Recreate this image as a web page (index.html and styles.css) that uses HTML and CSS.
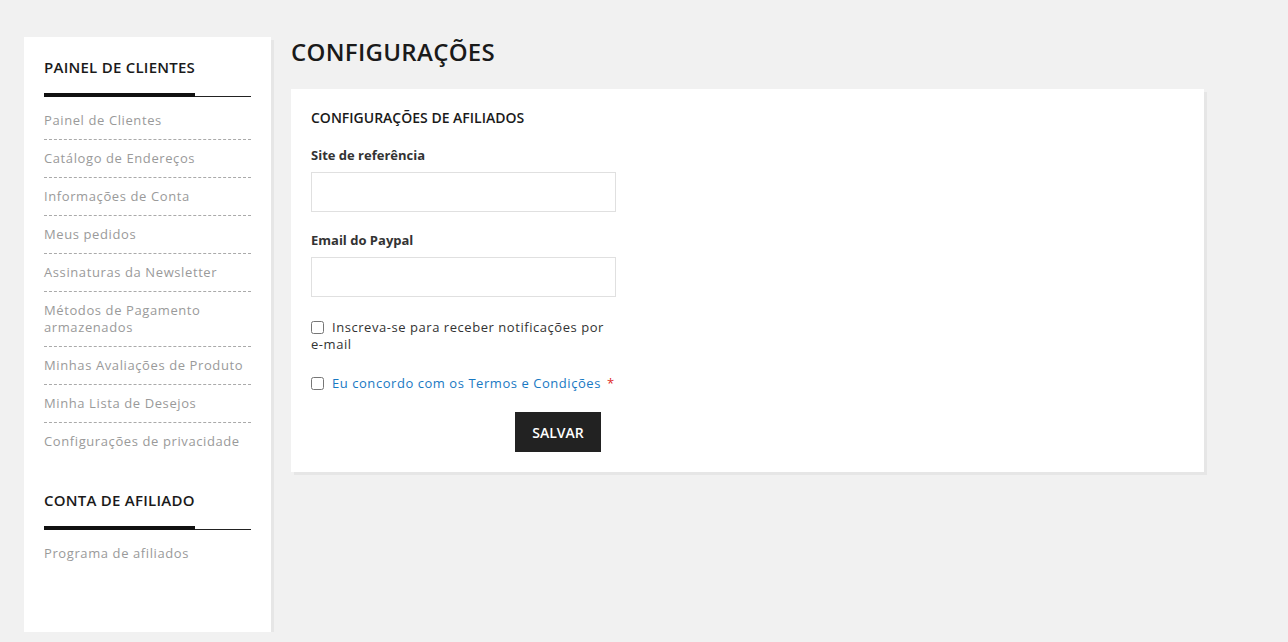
FILE: index.html
```html
<!DOCTYPE html>
<html lang="pt">
<head>
<meta charset="utf-8">
<title>Configurações</title>
<link rel="stylesheet" href="styles.css">
</head>
<body>
<div class="page">
  <aside class="sidebar">
    <div class="block">
      <div class="block-title"><h3>PAINEL DE CLIENTES</h3></div>
      <ul class="nav">
        <li>Painel de Clientes</li>
        <li>Catálogo de Endereços</li>
        <li>Informações de Conta</li>
        <li>Meus pedidos</li>
        <li>Assinaturas da Newsletter</li>
        <li>Métodos de Pagamento armazenados</li>
        <li>Minhas Avaliações de Produto</li>
        <li>Minha Lista de Desejos</li>
        <li>Configurações de privacidade</li>
      </ul>
    </div>
    <div class="block block-aff">
      <div class="block-title"><h3>CONTA DE AFILIADO</h3></div>
      <ul class="nav">
        <li>Programa de afiliados</li>
      </ul>
    </div>
  </aside>
  <main class="main">
    <h1 class="page-title">CONFIGURAÇÕES</h1>
    <div class="card">
      <h2 class="card-title">CONFIGURAÇÕES DE AFILIADOS</h2>
      <form class="form">
        <label class="field-label">Site de referência</label>
        <input class="input" type="text">
        <label class="field-label">Email do Paypal</label>
        <input class="input" type="text">
        <label class="check"><input type="checkbox"><span>Inscreva-se para receber notificações por e-mail</span></label>
        <label class="check check-terms"><input type="checkbox"><span class="link">Eu concordo com os Termos e Condições</span><span class="req">*</span></label>
        <div class="actions"><button type="button" class="btn">SALVAR</button></div>
      </form>
    </div>
  </main>
</div>
</body>
</html>
```

FILE: styles.css
```css
* { box-sizing: border-box; }
html, body { margin: 0; padding: 0; }
body {
  background: #f1f1f1;
  font-family: "Open Sans", sans-serif;
  color: #222;
}
.page {
  display: flex;
  align-items: flex-start;
  gap: 20px;
  padding: 37px 24px 0 24px;
}
.sidebar {
  width: 247px;
  flex: none;
  background: #fff;
  box-shadow: 3px 3px 0 #e6e6e6;
  padding: 20px 20px 0 20px;
  height: 595px;
}
.block-title {
  border-bottom: 1px solid #222;
  display: flex;
}
.block-title h3 {
  margin: 0 0 -1px 0;
  font-family: "Open Sans", sans-serif;
  font-weight: 600;
  font-size: 15px;
  line-height: 20px;
  letter-spacing: 0.25px;
  padding-bottom: 16px;
  border-bottom: 4px solid #111;
  color: #1a1a1a;
}
.nav {
  list-style: none;
  margin: 5px 0 0 0;
  padding: 0;
}
.nav li {
  font-size: 13px;
  line-height: 17px;
  letter-spacing: 0.6px;
  color: #9a9a9a;
  padding: 10px 0;
  border-bottom: 1px dashed #aaa;
}
.nav li:last-child { border-bottom: none; }
.block-aff { margin-top: 30px; }
.main {
  width: 913px;
  flex: none;
}
.page-title {
  margin: -1px 0 21px 0;
  font-family: "Open Sans", sans-serif;
  font-weight: 600;
  font-size: 24px;
  line-height: 32px;
  letter-spacing: 0.3px;
  color: #1a1a1a;
}
.card {
  background: #fff;
  box-shadow: 3px 3px 0 #e6e6e6;
  padding: 20px;
}
.card-title {
  margin: 0 0 19px 0;
  font-size: 14px;
  line-height: 18px;
  font-weight: 600;
  color: #1a1a1a;
}
.form {
  width: 305px;
  display: flex;
  flex-direction: column;
}
.field-label {
  font-size: 13px;
  font-weight: 700;
  line-height: 18px;
  color: #333;
  margin-bottom: 8px;
}
.input {
  height: 40px;
  border: 1px solid #e0e0e0;
  background: #fff;
  margin: 0 0 19px 0;
  font-family: inherit;
}
.input + .check { margin-top: 3px; }
.check {
  display: block;
  font-size: 13px;
  line-height: 17px;
  letter-spacing: 0.55px;
  color: #333;
  margin-bottom: 22px;
}
.check input {
  width: 13px;
  height: 13px;
  margin: 0 8px 0 0;
  vertical-align: -2px;
}
.link { color: #1979c3; }
.req { color: #e02b27; margin-left: 6px; letter-spacing: 0; }
.check-terms { margin-bottom: 20px; white-space: nowrap; }
.actions { padding-left: 204px; }
.btn {
  height: 40px;
  width: 86px;
  background: #222;
  color: #fff;
  border: none;
  font-family: "Open Sans", sans-serif;
  font-weight: 600;
  font-size: 14px;
  padding: 0;
}
```
